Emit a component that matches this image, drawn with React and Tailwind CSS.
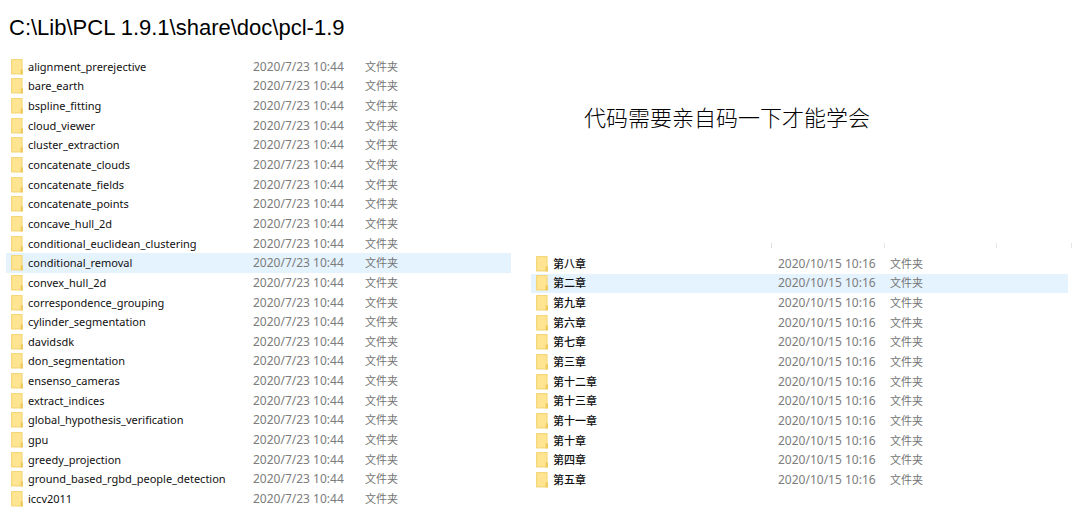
import React from "react";

const examples = [
  "alignment_prerejective",
  "bare_earth",
  "bspline_fitting",
  "cloud_viewer",
  "cluster_extraction",
  "concatenate_clouds",
  "concatenate_fields",
  "concatenate_points",
  "concave_hull_2d",
  "conditional_euclidean_clustering",
  "conditional_removal",
  "convex_hull_2d",
  "correspondence_grouping",
  "cylinder_segmentation",
  "davidsdk",
  "don_segmentation",
  "ensenso_cameras",
  "extract_indices",
  "global_hypothesis_verification",
  "gpu",
  "greedy_projection",
  "ground_based_rgbd_people_detection",
  "iccv2011",
];

const chapters = [
  "第八章",
  "第二章",
  "第九章",
  "第六章",
  "第七章",
  "第三章",
  "第十二章",
  "第十三章",
  "第十一章",
  "第十章",
  "第四章",
  "第五章",
];

function FolderIcon() {
  return (
    <svg className="block h-4 w-3 shrink-0" viewBox="0 0 12 16" aria-hidden="true">
      <rect x="0" y="0" width="11.6" height="15.4" rx="0.6" fill="#f5d779" />
      <rect x="1.2" y="1.1" width="9.2" height="13.2" fill="#ffe591" />
      <path d="M9.6 10.3h2q.4 0 .4.4v4.3q0 .4-.4.4h-2z" fill="#efcb5f" />
    </svg>
  );
}

function FileTable({ label, names, date, selected, nameStyle, className }) {
  return (
    <table
      aria-label={label}
      className={`w-full table-fixed border-collapse text-left leading-4 whitespace-nowrap ${className}`}
    >
      <colgroup>
        <col className="w-[247px]" />
        <col className="w-[112px]" />
        <col />
      </colgroup>
      <tbody>
        {names.map((name) => (
          <tr key={name} className={name === selected ? "bg-[#e5f3ff]" : ""}>
            <td className="p-0 pl-[5px]">
              <div className="flex items-center gap-[5px]">
                <FolderIcon />
                <span className={nameStyle}>{name}</span>
              </div>
            </td>
            <td className="p-0 text-xs leading-4 text-[#7c7c7c]">{date}</td>
            <td className="p-0 text-[#747474]">文件夹</td>
          </tr>
        ))}
      </tbody>
    </table>
  );
}

export default function App() {
  return (
    <main className="grid min-h-screen grid-cols-[505fr_537fr] gap-x-5 bg-white pr-3 pl-[6px] font-['Noto_Sans','Noto_Sans_CJK_SC',sans-serif] text-[11px]">
      <section>
        <h1 className="pt-3 pb-[13px] pl-[3px] font-['Liberation_Sans',sans-serif] text-[22px] leading-8 whitespace-nowrap text-black">
          C:\Lib\PCL 1.9.1\share\doc\pcl-1.9
        </h1>
        <FileTable
          label="pcl-1.9"
          names={examples}
          date="2020/7/23 10:44"
          selected="conditional_removal"
          nameStyle="text-[#101010]"
          className="h-[452px]"
        />
      </section>
      <section>
        <p className="pt-[100px] pb-[111px] pl-[53px] font-['Noto_Sans_CJK_SC',sans-serif] text-[22px] leading-8 font-light whitespace-nowrap text-black">
          代码需要亲自码一下才能学会
        </p>
        <div className="-mr-1 mb-[6px] flex h-[5px]" aria-hidden="true">
          <span className="w-[241px] border-r border-[#dedede]" />
          <span className="w-[113px] border-r border-[#e5e5e5]" />
          <span className="w-[112px] border-r border-[#e5e5e5]" />
          <span className="grow border-r border-[#e5e5e5]" />
        </div>
        <FileTable
          label="章节"
          names={chapters}
          date="2020/10/15 10:16"
          selected="第二章"
          nameStyle="font-medium text-[#101010]"
          className="h-[236px]"
        />
      </section>
    </main>
  );
}
